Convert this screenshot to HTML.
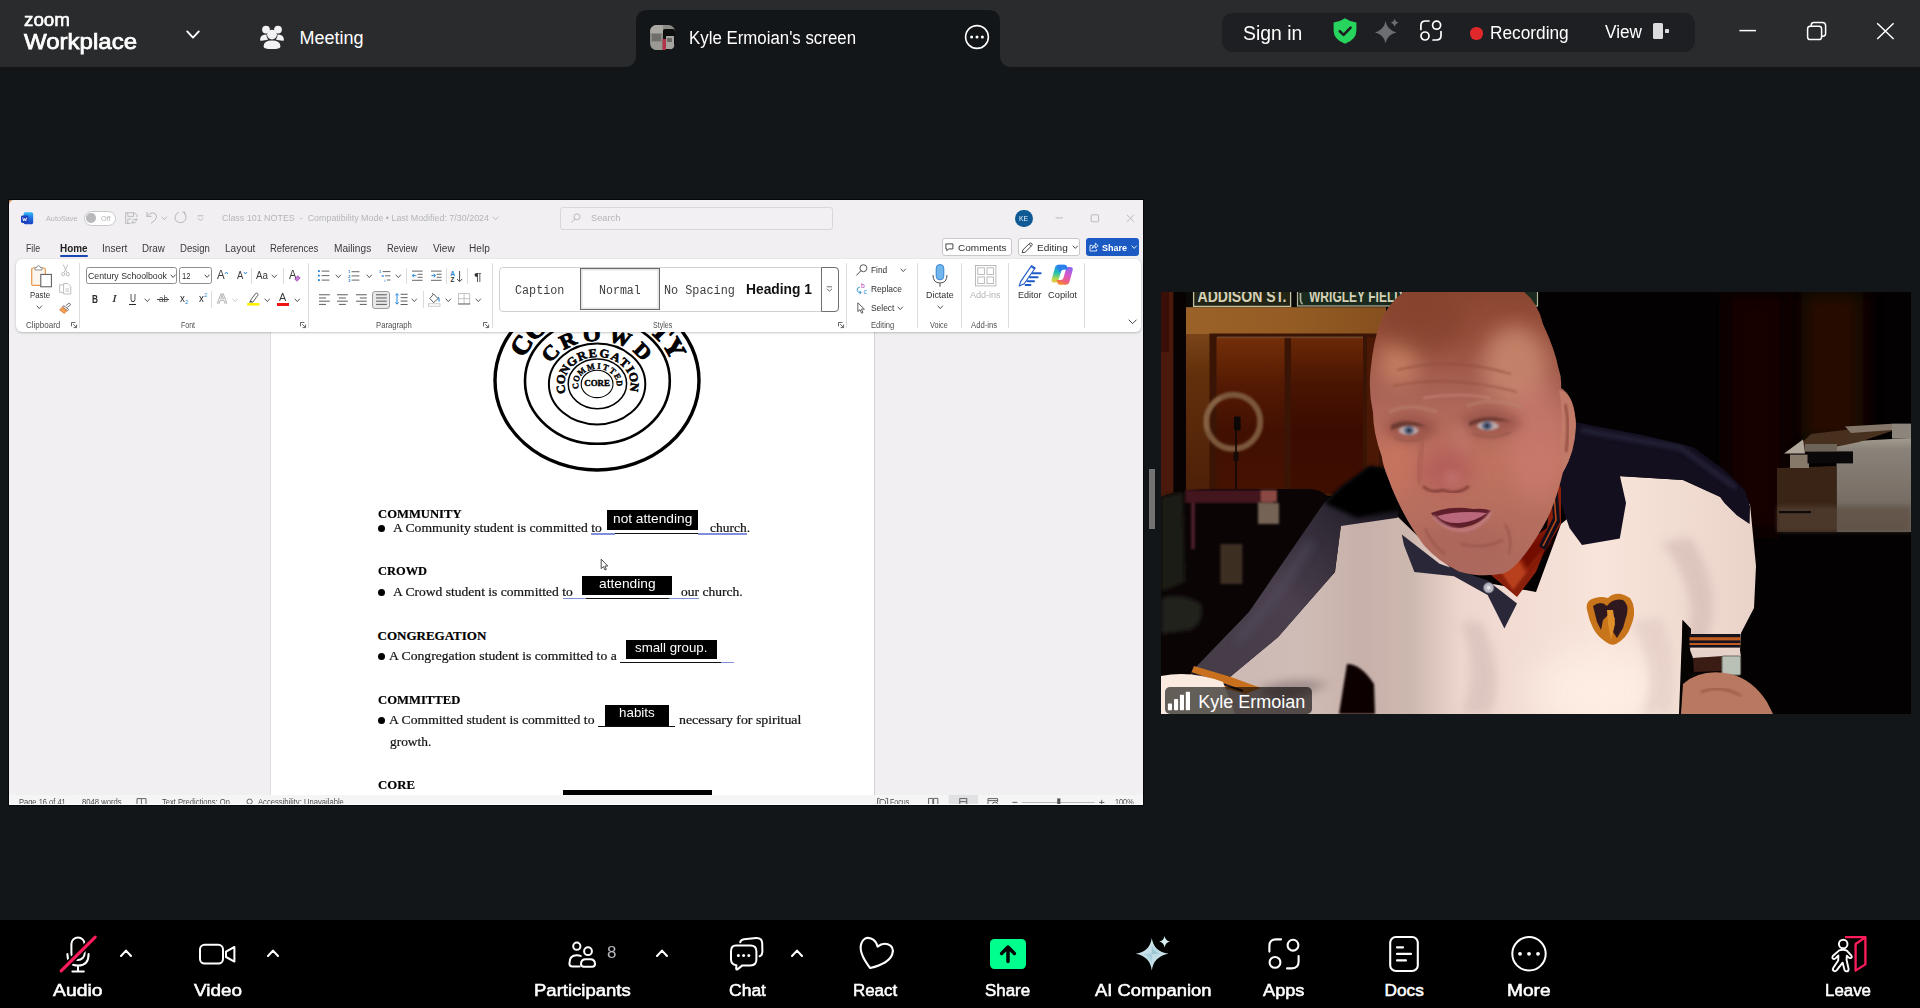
<!DOCTYPE html>
<html><head><meta charset="utf-8"><title>Zoom Meeting</title>
<style>
html,body{margin:0;padding:0;}
body{width:1920px;height:1008px;background:#131619;overflow:hidden;position:relative;font-family:"Liberation Sans",sans-serif;}
.a{position:absolute;display:block;box-sizing:border-box;}
.t{position:absolute;display:block;white-space:pre;line-height:1;transform-origin:0 0;}
svg{overflow:visible}
</style></head><body>
<div class="a" style="left:0.00px;top:0.00px;width:1920.00px;height:67.00px;background:#2a2b2d;"></div>
<svg class="a" style="left:0;top:0" width="1920" height="67"><path d="M624 67 Q636 67 636 55 L636 22 Q636 10 648 10 L988 10 Q1000 10 1000 22 L1000 55 Q1000 67 1012 67 Z" fill="#131619"/></svg>
<span class="t" style="left:24.00px;top:9.92px;font-size:19px;color:#fff;transform:scaleX(0.9900);-webkit-text-stroke:0.6px #fff;">zoom</span>
<span class="t" style="left:24.00px;top:31.38px;font-size:22px;color:#fff;transform:scaleX(1.0915);-webkit-text-stroke:0.75px #fff;">Workplace</span>
<svg class="a" style="left:185px;top:28px;" width="16" height="14" viewBox="0 0 16 14"><path d="M2.2 3.4 L8 9.6 L13.8 3.4" fill="none" stroke="#fff" stroke-width="1.9" stroke-linecap="round" stroke-linejoin="round"/></svg>
<svg class="a" style="left:258px;top:23px;" width="28" height="28" viewBox="0 0 28 28"><g fill="#f2f2f4"><circle cx="8" cy="6.6" r="3.9"/><circle cx="20" cy="6.6" r="3.9"/>
<path d="M2 17.6 Q2 11.2 8.5 11.6 Q8.2 14.5 10.2 16.6 Q7 17.8 2 17.6Z"/><path d="M26 17.6 Q26 11.2 19.5 11.6 Q19.8 14.5 17.8 16.6 Q21 17.8 26 17.6Z"/>
<circle cx="14" cy="11.6" r="4.9"/><path d="M5.6 23.4 Q5.6 17.6 14 17.6 Q22.4 17.6 22.4 23.4 Q22.4 26 14 26 Q5.6 26 5.6 23.4Z"/></g></svg>
<span class="t" style="left:299.60px;top:28.76px;font-size:18px;color:#fff;">Meeting</span>
<svg class="a" style="left:650px;top:25px;" width="25" height="25" viewBox="0 0 25 25"><defs><clipPath id="avc"><rect x="0" y="0" width="25" height="25" rx="6.5"/></clipPath></defs>
<g clip-path="url(#avc)"><rect width="25" height="25" fill="#8c8b86"/><rect x="0" y="0" width="13" height="8" fill="#a9a8a3"/><rect x="2" y="9" width="9" height="7" fill="#6f6e6a"/><rect x="1" y="17" width="11" height="8" fill="#9a9994"/>
<rect x="13" y="4" width="12" height="21" rx="2" fill="#0d0d0e"/><rect x="16" y="11" width="8" height="13" fill="#a5a4a0"/><rect x="12.5" y="14" width="3.5" height="11" fill="#b3344a"/><rect x="17" y="13" width="5" height="4" fill="#6a6966"/></g></svg>
<span class="t" style="left:689.40px;top:28.76px;font-size:18px;color:#fff;transform:scaleX(0.9355);">Kyle Ermoian's screen</span>
<svg class="a" style="left:963px;top:23px;" width="28" height="28" viewBox="0 0 28 28"><circle cx="14" cy="14" r="11.4" fill="none" stroke="#fff" stroke-width="1.6"/><circle cx="8.6" cy="14" r="1.5" fill="#fff"/><circle cx="14" cy="14" r="1.5" fill="#fff"/><circle cx="19.4" cy="14" r="1.5" fill="#fff"/></svg>
<div class="a" style="left:1222.00px;top:13.00px;width:473.00px;height:39.00px;background:#1e1f22;border-radius:11px;"></div>
<span class="t" style="left:1243.30px;top:23.07px;font-size:20px;color:#fff;transform:scaleX(0.9680);">Sign in</span>
<svg class="a" style="left:1333px;top:18px;" width="24" height="26" viewBox="0 0 24 26"><path d="M12 0.3 Q16.5 3.6 23.4 4.4 L23.4 12.4 Q23.4 21.4 12 25.8 Q0.6 21.4 0.6 12.4 L0.6 4.4 Q7.5 3.6 12 0.3Z" fill="#27d45e"/><path d="M6.8 13.2 L10.6 16.9 L17.6 9.6" fill="none" stroke="#1e1f22" stroke-width="2.6" stroke-linecap="round" stroke-linejoin="round"/></svg>
<svg class="a" style="left:1374px;top:18px;" width="26" height="26" viewBox="0 0 26 26"><path d="M11.6 3 Q12.8 11.6 22.4 14.4 Q12.8 16.6 11.6 25.2 Q10.2 16.6 1 14.4 Q10.2 11.6 11.6 3Z" fill="#6d6e71"/><path d="M20.6 0.6 Q21.2 4 24.8 4.8 Q21.2 5.6 20.6 9 Q20 5.6 16.4 4.8 Q20 4 20.6 0.6Z" fill="#6d6e71"/></svg>
<svg class="a" style="left:1419px;top:19px;" width="24" height="24" viewBox="0 0 24 24"><g fill="none" stroke="#fff" stroke-width="1.7" stroke-linecap="round"><circle cx="17.6" cy="6.2" r="4"/><circle cx="6" cy="17" r="4"/><path d="M1.9 10.4 L1.9 6.6 Q1.9 2 6.5 2 L10 2"/><path d="M22 12.6 L22 16.6 Q22 21 17.6 21 L14 21"/></g></svg>
<div class="a" style="left:1470.4px;top:27.2px;width:12.4px;height:12.4px;border-radius:50%;background:#e0282b"></div>
<span class="t" style="left:1489.60px;top:24.34px;font-size:18.5px;color:#fff;transform:scaleX(0.9333);">Recording</span>
<span class="t" style="left:1605.00px;top:22.96px;font-size:18px;color:#fff;transform:scaleX(0.9563);">View</span>
<div class="a" style="left:1653.00px;top:23.00px;width:10.40px;height:16.00px;background:#dcdcde;border-radius:1.6px;"></div>
<div class="a" style="left:1665.00px;top:28.60px;width:4.40px;height:4.60px;background:#dcdcde;border-radius:0.8px;"></div>
<svg class="a" style="left:1730px;top:14px;" width="180" height="34" viewBox="0 0 180 34"><g fill="none" stroke="#fff" stroke-width="1.5">
<path d="M9.4 16.6 L26 16.6"/>
<rect x="77.6" y="12.2" width="14" height="13.4" rx="2.6"/><path d="M81.2 12 L81.2 11 Q81.2 8.4 83.8 8.4 L92.4 8.4 Q95.6 8.4 95.6 11.6 L95.6 19.6 Q95.6 22.2 93 22.2 L92 22.2"/>
<path d="M147.2 9.2 L163.6 25 M163.6 9.2 L147.2 25"/></g></svg>
<div class="a" style="left:0.00px;top:920.00px;width:1920.00px;height:88.00px;background:#000;"></div>
<svg class="a" style="left:58px;top:932px;" width="42" height="44" viewBox="0 0 42 44"><g fill="none" stroke="#fff" stroke-width="2" stroke-linecap="round">
<rect x="13.4" y="5.4" width="13.2" height="22.6" rx="6.6"/><path d="M9.4 22 Q9.4 33.6 20 33.6 Q30.6 33.6 30.6 22"/><path d="M20 34 L20 39.2 M14.4 39.4 L25.8 39.4"/></g>
<path d="M3.4 38.6 L36.8 5.6" stroke="#000" stroke-width="6.4" stroke-linecap="butt"/><path d="M3.2 38.8 L37.2 5.2" stroke="#ff1c5c" stroke-width="3.1" stroke-linecap="round"/></svg>
<span class="t" style="left:53.00px;top:981.64px;font-size:17.2px;color:#fff;transform:scaleX(1.1252);-webkit-text-stroke:0.55px #fff;">Audio</span>
<svg class="a" style="left:119.2px;top:947.8px;" width="14" height="10" viewBox="0 0 14 10"><path d="M2 8 L7 2.6 L12 8" fill="none" stroke="#fff" stroke-width="2.1" stroke-linecap="round" stroke-linejoin="round"/></svg>
<svg class="a" style="left:196px;top:940px;" width="44" height="28" viewBox="0 0 44 28"><g fill="none" stroke="#fff" stroke-width="2" stroke-linejoin="round"><rect x="4" y="4.8" width="23" height="18.8" rx="4.6"/><path d="M30 11.6 L38.4 7 L38.4 21.6 L30 17Z"/></g></svg>
<span class="t" style="left:193.75px;top:981.64px;font-size:17.2px;color:#fff;transform:scaleX(1.0988);-webkit-text-stroke:0.55px #fff;">Video</span>
<svg class="a" style="left:266px;top:947.8px;" width="14" height="10" viewBox="0 0 14 10"><path d="M2 8 L7 2.6 L12 8" fill="none" stroke="#fff" stroke-width="2.1" stroke-linecap="round" stroke-linejoin="round"/></svg>
<svg class="a" style="left:565px;top:938px;" width="34" height="32" viewBox="0 0 34 32"><g fill="none" stroke="#fff" stroke-width="2" stroke-linecap="round"><circle cx="11.8" cy="8.2" r="3.6"/><circle cx="23" cy="13.2" r="3.9"/>
<path d="M14.6 28.4 L7.4 28.4 Q4.4 28.4 4.4 25.4 Q4.4 17.2 11.8 17.2 Q14.4 17.2 15.8 18"/><path d="M16 26 Q16 21.2 20.8 21.2 L25.2 21.2 Q30 21.2 30 26 Q30 28.8 27.2 28.8 L18.8 28.8 Q16 28.8 16 26Z"/></g></svg>
<span class="t" style="left:607.30px;top:944.41px;font-size:17px;color:#b6b6be;transform:scaleX(0.9942);">8</span>
<span class="t" style="left:534.00px;top:981.64px;font-size:17.2px;color:#fff;transform:scaleX(1.0772);-webkit-text-stroke:0.55px #fff;">Participants</span>
<svg class="a" style="left:655px;top:947.8px;" width="14" height="10" viewBox="0 0 14 10"><path d="M2 8 L7 2.6 L12 8" fill="none" stroke="#fff" stroke-width="2.1" stroke-linecap="round" stroke-linejoin="round"/></svg>
<svg class="a" style="left:727px;top:934px;" width="40" height="40" viewBox="0 0 40 40"><g fill="none" stroke="#fff" stroke-width="2" stroke-linecap="round" stroke-linejoin="round">
<path d="M8.8 11.6 L23.6 11.6 Q29.4 11.6 29.4 17.4 L29.4 25.6 Q29.4 31.4 23.6 31.4 L15.4 31.4 L10.4 35.4 Q9.2 36 9.2 34.4 L9.4 31.2 Q4 30.6 4 25.6 L4 17.4 Q4 11.6 8.8 11.6Z"/>
<path d="M13.2 8.2 Q13.8 5.6 17 5.2 L29.2 4 Q35 3.8 35.2 9.4 L35.4 17.4 Q35.2 21.6 32.6 22.2"/></g>
<circle cx="11.4" cy="21.6" r="1.5" fill="#fff"/><circle cx="16.6" cy="21.6" r="1.5" fill="#fff"/><circle cx="21.8" cy="21.6" r="1.5" fill="#fff"/></svg>
<span class="t" style="left:729.00px;top:981.64px;font-size:17.2px;color:#fff;transform:scaleX(1.0184);-webkit-text-stroke:0.55px #fff;">Chat</span>
<svg class="a" style="left:789.6px;top:947.8px;" width="14" height="10" viewBox="0 0 14 10"><path d="M2 8 L7 2.6 L12 8" fill="none" stroke="#fff" stroke-width="2.1" stroke-linecap="round" stroke-linejoin="round"/></svg>
<svg class="a" style="left:855px;top:936px;" width="40" height="36" viewBox="0 0 40 36"><path transform="rotate(19 20 18) translate(20 18) scale(1.06) translate(-20 -18)" d="M20 32 Q4.6 22 4.6 13 Q4.6 5.4 11.6 5.4 Q16.8 5.4 20 10.6 Q23.2 5.4 28.4 5.4 Q35.4 5.4 35.4 13 Q35.4 22 20 32Z" fill="none" stroke="#fff" stroke-width="2" stroke-linejoin="round"/></svg>
<span class="t" style="left:852.50px;top:981.64px;font-size:17.2px;color:#fff;transform:scaleX(0.9837);-webkit-text-stroke:0.55px #fff;">React</span>
<div class="a" style="left:990.00px;top:939.00px;width:36.00px;height:29.80px;background:#00fe8d;border-radius:4.5px;"></div>
<svg class="a" style="left:998px;top:943px;" width="20" height="22" viewBox="0 0 20 22"><path d="M10 18.6 L10 5 M3.6 10.4 L10 4 L16.4 10.4" fill="none" stroke="#050505" stroke-width="3.5" stroke-linecap="round" stroke-linejoin="round"/></svg>
<span class="t" style="left:985.40px;top:981.64px;font-size:17.2px;color:#fff;transform:scaleX(0.9848);-webkit-text-stroke:0.55px #fff;">Share</span>
<svg class="a" style="left:1133px;top:934px;" width="40" height="40" viewBox="0 0 40 40"><defs><linearGradient id="aig" x1="0" y1="0" x2="1" y2="1"><stop offset="0" stop-color="#f4fbfc"/><stop offset="0.5" stop-color="#b9d9e3"/><stop offset="1" stop-color="#e6f3f6"/></linearGradient></defs>
<path d="M18.8 4 Q20.6 17.4 35.6 19.8 Q20.6 22.6 18.8 36.4 Q17 22.6 2.8 19.8 Q17 17.4 18.8 4Z" fill="url(#aig)"/><path d="M18.8 10 Q19.4 18.6 28 19.8 L18.8 19.8Z" fill="#8fbccb" opacity="0.7"/><path d="M18.8 30 Q18.2 21.4 9 19.8 L18.8 19.8Z" fill="#9cc6d3" opacity="0.6"/>
<path d="M31.6 2 Q32.4 6.8 37 7.6 Q32.4 8.6 31.6 13.4 Q30.8 8.6 26.2 7.6 Q30.8 6.8 31.6 2Z" fill="#d7edf2"/></svg>
<span class="t" style="left:1094.60px;top:981.64px;font-size:17.2px;color:#fff;transform:scaleX(1.0697);-webkit-text-stroke:0.55px #fff;">AI Companion</span>
<svg class="a" style="left:1266px;top:936px;" width="36" height="36" viewBox="0 0 36 36"><g fill="none" stroke="#fff" stroke-width="2.1" stroke-linecap="round"><circle cx="27" cy="9.2" r="5.4"/><circle cx="9" cy="26.4" r="5.4"/><path d="M3.4 15.6 L3.4 10 Q3.4 3.4 10 3.4 L15 3.4"/><path d="M32.6 20 L32.6 25.6 Q32.6 32.4 25.8 32.4 L21 32.4"/></g></svg>
<span class="t" style="left:1263.30px;top:981.64px;font-size:17.2px;color:#fff;transform:scaleX(1.0585);-webkit-text-stroke:0.55px #fff;">Apps</span>
<svg class="a" style="left:1386px;top:933px;" width="36" height="42" viewBox="0 0 36 42"><g fill="none" stroke="#fff" stroke-width="2.1" stroke-linecap="round"><rect x="4.2" y="4" width="27.6" height="34" rx="5.6"/><path d="M11 14.4 L17 14.4 M11 20.9 L25 20.9 M11 27.4 L20 27.4"/></g></svg>
<span class="t" style="left:1384.60px;top:981.64px;font-size:17.2px;color:#fff;-webkit-text-stroke:0.55px #fff;">Docs</span>
<svg class="a" style="left:1509px;top:934px;" width="40" height="40" viewBox="0 0 40 40"><circle cx="20" cy="19.8" r="16.7" fill="none" stroke="#fff" stroke-width="2"/><circle cx="11" cy="19.8" r="1.9" fill="#fff"/><circle cx="20" cy="19.8" r="1.9" fill="#fff"/><circle cx="29" cy="19.8" r="1.9" fill="#fff"/></svg>
<span class="t" style="left:1507.00px;top:981.64px;font-size:17.2px;color:#fff;transform:scaleX(1.1126);-webkit-text-stroke:0.55px #fff;">More</span>
<svg class="a" style="left:1828px;top:933px;" width="42" height="42" viewBox="0 0 42 42"><path d="M17 4.2 L37.4 4.2 L37.4 31.4 L27.6 37.6 L27.6 11 L37 4.6" fill="none" stroke="#ff1c5c" stroke-width="2.3" stroke-linejoin="round"/>
<circle cx="15.2" cy="11" r="4.3" fill="#000" stroke="#fff" stroke-width="1.9"/>
<path d="M11.2 17.4 Q15 16 18.8 17.6 L23.4 22.6 Q24.4 24.4 22.8 25 Q21.6 25.4 20.6 24.4 L18.8 22.8 L18.6 27 L20.6 36 Q20.6 38.4 18.6 38.4 Q16.8 38.4 16.4 36.4 L14.6 29.6 L8.6 37.4 Q7.2 38.8 5.6 37.8 Q4.2 36.6 5.2 35 L10.2 27.4 L10.4 22.4 L7.4 25.4 Q6 26.6 4.8 25.6 Q3.8 24.4 4.8 23 Z" fill="#000" stroke="#fff" stroke-width="1.9" stroke-linejoin="round"/></svg>
<span class="t" style="left:1825.00px;top:981.64px;font-size:17.2px;color:#fff;transform:scaleX(0.9816);-webkit-text-stroke:0.55px #fff;">Leave</span>
<div class="a" style="left:8.00px;top:199.00px;width:1136.00px;height:607.00px;background:#05070a;"></div>
<div class="a" style="left:9.00px;top:200.00px;width:7.00px;height:7.00px;background:#c8834f;"></div>
<div class="a" style="left:9.00px;top:332.00px;width:1134.00px;height:473.00px;background:#f1eff2;"></div>
<div class="a" style="left:270.00px;top:332.00px;width:605.00px;height:470.00px;background:#fff;border-left:1px solid #dedede;border-right:1px solid #d5d3d6;"></div>
<svg class="a" style="left:470px;top:325px" width="260" height="160" viewBox="470 325 260 160">
<g fill="none" stroke="#000">
<ellipse cx="597" cy="380.5" rx="102" ry="89.5" stroke-width="3.4"/>
<ellipse cx="597.4" cy="381" rx="72.4" ry="62.8" stroke-width="2.6"/>
<ellipse cx="597.1" cy="384" rx="48.2" ry="40.4" stroke-width="2"/>
<ellipse cx="597.4" cy="383.8" rx="29.2" ry="24.9" stroke-width="1.5"/>
<ellipse cx="597.1" cy="383.9" rx="15.9" ry="13.7" stroke-width="1.1"/>
</g>
<g font-family="'Liberation Serif',serif" font-weight="700" fill="#000" stroke="#000" stroke-linejoin="round"><text transform="translate(521.35 345.30) rotate(-57.9) scale(1.05 1)" y="8.58" font-size="26" stroke-width="1.1" text-anchor="middle">C</text><text transform="translate(535.48 328.79) rotate(-41.4) scale(1.05 1)" y="8.58" font-size="26" stroke-width="1.1" text-anchor="middle">O</text><text transform="translate(556.70 315.13) rotate(-24.5) scale(1.05 1)" y="8.58" font-size="26" stroke-width="1.1" text-anchor="middle">M</text><text transform="translate(583.74 307.39) rotate(-7.6) scale(1.05 1)" y="8.58" font-size="26" stroke-width="1.1" text-anchor="middle">M</text><text transform="translate(609.57 307.29) rotate(7.2) scale(1.05 1)" y="8.58" font-size="26" stroke-width="1.1" text-anchor="middle">U</text><text transform="translate(631.81 312.83) rotate(20.9) scale(1.05 1)" y="8.58" font-size="26" stroke-width="1.1" text-anchor="middle">N</text><text transform="translate(648.33 321.13) rotate(32.6) scale(1.05 1)" y="8.58" font-size="26" stroke-width="1.1" text-anchor="middle">I</text><text transform="translate(661.88 331.92) rotate(44.7) scale(1.05 1)" y="8.58" font-size="26" stroke-width="1.1" text-anchor="middle">T</text><text transform="translate(674.30 348.06) rotate(60.5) scale(1.05 1)" y="8.58" font-size="26" stroke-width="1.1" text-anchor="middle">Y</text><text transform="translate(550.39 353.16) rotate(-47.0) scale(1.08 1)" y="6.77" font-size="20.5" stroke-width="0.9" text-anchor="middle">C</text><text transform="translate(567.83 340.55) rotate(-25.5) scale(1.08 1)" y="6.77" font-size="20.5" stroke-width="0.9" text-anchor="middle">R</text><text transform="translate(591.70 334.23) rotate(-4.6) scale(1.08 1)" y="6.77" font-size="20.5" stroke-width="0.9" text-anchor="middle">O</text><text transform="translate(620.17 337.77) rotate(19.0) scale(1.08 1)" y="6.77" font-size="20.5" stroke-width="0.9" text-anchor="middle">W</text><text transform="translate(642.64 351.35) rotate(44.2) scale(1.08 1)" y="6.77" font-size="20.5" stroke-width="0.9" text-anchor="middle">D</text><text transform="translate(561.06 389.38) rotate(-101.9) scale(1.05 1)" y="3.96" font-size="12" stroke-width="0.55" text-anchor="middle">C</text><text transform="translate(560.93 379.30) rotate(-79.6) scale(1.05 1)" y="3.96" font-size="12" stroke-width="0.55" text-anchor="middle">O</text><text transform="translate(564.66 369.72) rotate(-58.2) scale(1.05 1)" y="3.96" font-size="12" stroke-width="0.55" text-anchor="middle">N</text><text transform="translate(571.86 361.65) rotate(-38.8) scale(1.05 1)" y="3.96" font-size="12" stroke-width="0.55" text-anchor="middle">G</text><text transform="translate(581.78 355.94) rotate(-21.5) scale(1.05 1)" y="3.96" font-size="12" stroke-width="0.55" text-anchor="middle">R</text><text transform="translate(592.69 353.26) rotate(-6.3) scale(1.05 1)" y="3.96" font-size="12" stroke-width="0.55" text-anchor="middle">E</text><text transform="translate(604.39 353.54) rotate(9.0) scale(1.05 1)" y="3.96" font-size="12" stroke-width="0.55" text-anchor="middle">G</text><text transform="translate(615.69 357.01) rotate(25.3) scale(1.05 1)" y="3.96" font-size="12" stroke-width="0.55" text-anchor="middle">A</text><text transform="translate(624.62 362.91) rotate(42.1) scale(1.05 1)" y="3.96" font-size="12" stroke-width="0.55" text-anchor="middle">T</text><text transform="translate(630.07 369.30) rotate(57.3) scale(1.05 1)" y="3.96" font-size="12" stroke-width="0.55" text-anchor="middle">I</text><text transform="translate(633.59 377.18) rotate(74.9) scale(1.05 1)" y="3.96" font-size="12" stroke-width="0.55" text-anchor="middle">O</text><text transform="translate(634.30 387.24) rotate(97.2) scale(1.05 1)" y="3.96" font-size="12" stroke-width="0.55" text-anchor="middle">N</text><text transform="translate(575.62 385.88) rotate(-97.3) scale(0.95 1)" y="2.84" font-size="8.6" stroke-width="0.4" text-anchor="middle">C</text><text transform="translate(576.53 378.55) rotate(-68.8) scale(0.95 1)" y="2.84" font-size="8.6" stroke-width="0.4" text-anchor="middle">O</text><text transform="translate(581.62 371.55) rotate(-40.5) scale(0.95 1)" y="2.84" font-size="8.6" stroke-width="0.4" text-anchor="middle">M</text><text transform="translate(590.63 366.90) rotate(-15.0) scale(0.95 1)" y="2.84" font-size="8.6" stroke-width="0.4" text-anchor="middle">M</text><text transform="translate(598.86 366.03) rotate(2.9) scale(0.95 1)" y="2.84" font-size="8.6" stroke-width="0.4" text-anchor="middle">I</text><text transform="translate(605.79 367.33) rotate(18.4) scale(0.95 1)" y="2.84" font-size="8.6" stroke-width="0.4" text-anchor="middle">T</text><text transform="translate(612.75 371.03) rotate(38.2) scale(0.95 1)" y="2.84" font-size="8.6" stroke-width="0.4" text-anchor="middle">T</text><text transform="translate(617.54 376.57) rotate(61.0) scale(0.95 1)" y="2.84" font-size="8.6" stroke-width="0.4" text-anchor="middle">E</text><text transform="translate(619.49 383.37) rotate(87.6) scale(0.95 1)" y="2.84" font-size="8.6" stroke-width="0.4" text-anchor="middle">D</text>
<text x="597.1" y="385.9" font-size="8.4" stroke-width="0.4" text-anchor="middle" textLength="25.6" lengthAdjust="spacingAndGlyphs">CORE</text>
</g></svg>
<span class="t" style="left:377.50px;top:506.71px;font-size:13px;color:#000;font-weight:700;font-family:'Liberation Serif',serif;transform:scaleX(0.9728);-webkit-text-stroke:0.2px #000;">COMMUNITY</span>
<div class="a" style="left:377.6px;top:524.6px;width:7.2px;height:7.2px;border-radius:50%;background:#000"></div>
<span class="t" style="left:392.50px;top:521.75px;font-size:12px;color:#111;font-family:'Liberation Serif',serif;transform:scaleX(1.1369);-webkit-text-stroke:0.22px #222;">A Community student is committed to</span>
<div class="a" style="left:608.00px;top:532.80px;width:95.40px;height:1.00px;background:#111;"></div>
<div class="a" style="left:591.20px;top:533.40px;width:23.60px;height:1.40px;background:#7f8fd8;"></div>
<div class="a" style="left:698.00px;top:533.40px;width:49.40px;height:1.40px;background:#7f8fd8;"></div>
<div class="a" style="left:607.20px;top:509.90px;width:90.50px;height:20.10px;background:#000;"></div>
<span class="t" style="left:613.00px;top:512.27px;font-size:13.5px;color:#fff;transform:scaleX(1.0158);">not attending</span>
<span class="t" style="left:710.10px;top:521.75px;font-size:12px;color:#111;font-family:'Liberation Serif',serif;transform:scaleX(1.1221);-webkit-text-stroke:0.22px #222;">church.</span>
<span class="t" style="left:377.50px;top:563.61px;font-size:13px;color:#000;font-weight:700;font-family:'Liberation Serif',serif;transform:scaleX(0.9575);-webkit-text-stroke:0.2px #000;">CROWD</span>
<div class="a" style="left:377.6px;top:589.1px;width:7.2px;height:7.2px;border-radius:50%;background:#000"></div>
<span class="t" style="left:392.50px;top:586.35px;font-size:12px;color:#111;font-family:'Liberation Serif',serif;transform:scaleX(1.1302);-webkit-text-stroke:0.22px #222;">A Crowd student is committed to</span>
<div class="a" style="left:579.50px;top:597.50px;width:94.80px;height:1.00px;background:#111;"></div>
<div class="a" style="left:563.00px;top:597.90px;width:22.60px;height:1.40px;background:#7f8fd8;"></div>
<div class="a" style="left:668.80px;top:597.90px;width:29.80px;height:1.40px;background:#7f8fd8;"></div>
<div class="a" style="left:581.90px;top:575.60px;width:90.10px;height:19.20px;background:#000;"></div>
<span class="t" style="left:598.70px;top:577.27px;font-size:13.5px;color:#fff;transform:scaleX(1.0189);">attending</span>
<span class="t" style="left:681.00px;top:586.35px;font-size:12px;color:#111;font-family:'Liberation Serif',serif;transform:scaleX(1.1273);-webkit-text-stroke:0.22px #222;">our church.</span>
<span class="t" style="left:377.50px;top:628.51px;font-size:13px;color:#000;font-weight:700;font-family:'Liberation Serif',serif;-webkit-text-stroke:0.2px #000;">CONGREGATION</span>
<div class="a" style="left:377.6px;top:653.2px;width:7.2px;height:7.2px;border-radius:50%;background:#000"></div>
<span class="t" style="left:389.40px;top:650.35px;font-size:12px;color:#111;font-family:'Liberation Serif',serif;transform:scaleX(1.1387);-webkit-text-stroke:0.22px #222;">A Congregation student is committed to a</span>
<div class="a" style="left:620.40px;top:661.80px;width:112.60px;height:1.00px;background:#111;"></div>
<div class="a" style="left:721.00px;top:661.80px;width:12.80px;height:1.60px;background:#7f8fd8;"></div>
<div class="a" style="left:626.20px;top:639.60px;width:90.40px;height:19.30px;background:#000;"></div>
<span class="t" style="left:635.00px;top:641.07px;font-size:13.5px;color:#fff;transform:scaleX(0.9846);">small group.</span>
<span class="t" style="left:377.50px;top:692.51px;font-size:13px;color:#000;font-weight:700;font-family:'Liberation Serif',serif;transform:scaleX(0.9740);-webkit-text-stroke:0.2px #000;">COMMITTED</span>
<div class="a" style="left:377.6px;top:717.1px;width:7.2px;height:7.2px;border-radius:50%;background:#000"></div>
<span class="t" style="left:389.40px;top:714.35px;font-size:12px;color:#111;font-family:'Liberation Serif',serif;transform:scaleX(1.1396);-webkit-text-stroke:0.22px #222;">A Committed student is committed to</span>
<div class="a" style="left:598.20px;top:726.10px;width:77.10px;height:1.00px;background:#111;"></div>
<div class="a" style="left:604.50px;top:704.90px;width:64.10px;height:21.10px;background:#000;"></div>
<span class="t" style="left:618.50px;top:706.27px;font-size:13.5px;color:#fff;transform:scaleX(0.9910);">habits</span>
<span class="t" style="left:679.00px;top:714.35px;font-size:12px;color:#111;font-family:'Liberation Serif',serif;transform:scaleX(1.1542);-webkit-text-stroke:0.22px #222;">necessary for spiritual</span>
<span class="t" style="left:390.00px;top:735.75px;font-size:12px;color:#111;font-family:'Liberation Serif',serif;transform:scaleX(1.1163);-webkit-text-stroke:0.22px #222;">growth.</span>
<span class="t" style="left:377.50px;top:777.81px;font-size:13px;color:#000;font-weight:700;font-family:'Liberation Serif',serif;transform:scaleX(0.9824);-webkit-text-stroke:0.2px #000;">CORE</span>
<div class="a" style="left:563.00px;top:790.20px;width:149.20px;height:6.00px;background:#000;"></div>
<svg class="a" style="left:600px;top:558px;" width="10" height="14" viewBox="0 0 10 14"><path d="M1.2 1.2 L1.2 10.6 L3.4 8.6 L5 12 L6.4 11.4 L4.9 8.1 L7.8 8 Z" fill="#fff" stroke="#222" stroke-width="0.8" stroke-linejoin="round"/></svg>
<div class="a" style="left:9.00px;top:200.00px;width:1134.00px;height:132.00px;background:#f1eff2;border-top-left-radius:5px;"></div>
<svg class="a" style="left:21px;top:212px;" width="12.4" height="12.4" viewBox="0 0 12.4 12.4"><defs><linearGradient id="wg" x1="0" y1="0" x2="0" y2="1"><stop offset="0" stop-color="#35b8f5"/><stop offset="0.5" stop-color="#2170e0"/><stop offset="1" stop-color="#1a40c0"/></linearGradient></defs>
<rect x="2.6" y="0.2" width="9.6" height="12" rx="1.6" fill="url(#wg)"/><rect x="0" y="3.6" width="7.4" height="7.4" rx="1.4" fill="#1a3fbf"/><path d="M1.7 5.6 L2.7 9 L3.7 6.4 L4.7 9 L5.7 5.6" fill="none" stroke="#fff" stroke-width="0.9" stroke-linejoin="round"/></svg>
<span class="t" style="left:46.00px;top:214.77px;font-size:7.6px;color:#b4b4b6;transform:scaleX(0.9558);">AutoSave</span>
<div class="a" style="left:83.5px;top:210.6px;width:32.2px;height:15px;border-radius:8px;background:#fff;border:1px solid #c8c8ca"></div>
<div class="a" style="left:86px;top:213.4px;width:9.6px;height:9.6px;border-radius:50%;background:#b9b9bb"></div>
<span class="t" style="left:101.00px;top:214.77px;font-size:7.6px;color:#b4b4b6;transform:scaleX(0.9603);">Off</span>
<svg class="a" style="left:125px;top:212px;" width="13" height="12.4" viewBox="0 0 13 12.4"><g fill="none" stroke="#b4b4b6" stroke-width="0.9"><path d="M0.6 0.8 L9.6 0.8 L12 3.2 L12 5 M0.6 0.8 L0.6 11.4 L5.4 11.4"/><path d="M2.8 0.8 L2.8 4.4 L8.6 4.4 L8.6 0.8"/><path d="M2.8 11.4 L2.8 7 L6.2 7"/><path d="M7.4 8.2 Q9.6 6 11.6 8 M11.8 6.4 L11.7 8.3 L9.8 8.2 M11.2 10 Q9 12.2 7 10.2 M6.8 11.8 L6.9 9.9 L8.8 10"/></g></svg>
<svg class="a" style="left:146px;top:211.4px;" width="12" height="13" viewBox="0 0 12 13"><path d="M1 1.2 L1 5.4 L5.2 5.4 M1.2 5.2 Q3.4 1.6 6.8 1.8 Q10.6 2.2 10.6 6 Q10.6 8.6 5.4 12.2" fill="none" stroke="#b4b4b6" stroke-width="0.95" stroke-linecap="round" stroke-linejoin="round"/></svg>
<svg class="a" style="left:161.40px;top:215.70px" width="6.6" height="4.6"><path d="M1 1 L3.30 3.60 L5.60 1" fill="none" stroke="#b4b4b6" stroke-width="0.9" stroke-linecap="round" stroke-linejoin="round"/></svg>
<svg class="a" style="left:173.6px;top:211.4px;" width="13" height="13" viewBox="0 0 13 13"><path d="M8.6 1 L10.6 1 L10.6 3.2 M10.4 1.4 Q12.4 3.6 12 6.8 Q11.2 11.6 6.4 11.6 Q1.2 11.4 1 6.4 Q1.2 2.4 4.6 1.4" fill="none" stroke="#b4b4b6" stroke-width="0.95" stroke-linecap="round" stroke-linejoin="round"/></svg>
<svg class="a" style="left:197.4px;top:214.6px;" width="7" height="7" viewBox="0 0 7 7"><path d="M1 0.8 L6 0.8 M1 3.2 L3.5 5.8 L6 3.2" fill="none" stroke="#b4b4b6" stroke-width="0.9" stroke-linecap="round" stroke-linejoin="round"/></svg>
<span class="t" style="left:222.00px;top:215.46px;font-size:8.2px;color:#b4b4b6;transform:scaleX(1.0879);">Class 101 NOTES  -  Compatibility Mode • Last Modified: 7/30/2024</span>
<svg class="a" style="left:492.40px;top:216.30px" width="7" height="4.8"><path d="M1 1 L3.50 3.80 L6.00 1" fill="none" stroke="#b4b4b6" stroke-width="0.9" stroke-linecap="round" stroke-linejoin="round"/></svg>
<div class="a" style="left:560px;top:206.6px;width:272.6px;height:23.4px;border:1px solid #d9d7da;border-radius:3px;background:#f2f0f2"></div>
<svg class="a" style="left:570.6px;top:213px;" width="10" height="10" viewBox="0 0 10 10"><circle cx="6" cy="3.8" r="3" fill="none" stroke="#b4b4b6" stroke-width="0.9"/><path d="M3.8 6 L0.8 9.2" stroke="#b4b4b6" stroke-width="0.9" stroke-linecap="round"/></svg>
<span class="t" style="left:590.60px;top:213.52px;font-size:8.6px;color:#b4b4b6;transform:scaleX(1.0789);">Search</span>
<div class="a" style="left:1015px;top:209.6px;width:17.6px;height:17.6px;border-radius:50%;background:#0f5a94"></div>
<span class="t" style="left:1019.40px;top:215.17px;font-size:7.6px;color:#eaf2fa;transform:scaleX(0.8877);">KE</span>
<svg class="a" style="left:1050px;top:210px;" width="90" height="16" viewBox="0 0 90 16"><g fill="none" stroke="#b4b4b6" stroke-width="0.9"><path d="M5.6 7.9 L13 7.9"/><rect x="41.2" y="4.8" width="7.4" height="7" rx="0.8"/><path d="M77 4.8 L84 11.8 M84 4.8 L77 11.8"/></g></svg>
<span class="t" style="left:25.60px;top:243.63px;font-size:10px;color:#3a3a3a;transform:scaleX(0.8781);">File</span>
<span class="t" style="left:101.50px;top:243.63px;font-size:10px;color:#3a3a3a;transform:scaleX(1.0156);">Insert</span>
<span class="t" style="left:142.25px;top:243.63px;font-size:10px;color:#3a3a3a;transform:scaleX(0.9749);">Draw</span>
<span class="t" style="left:179.60px;top:243.63px;font-size:10px;color:#3a3a3a;transform:scaleX(0.9573);">Design</span>
<span class="t" style="left:225.00px;top:243.63px;font-size:10px;color:#3a3a3a;transform:scaleX(1.0092);">Layout</span>
<span class="t" style="left:270.40px;top:243.63px;font-size:10px;color:#3a3a3a;transform:scaleX(0.9445);">References</span>
<span class="t" style="left:334.40px;top:243.63px;font-size:10px;color:#3a3a3a;transform:scaleX(1.0141);">Mailings</span>
<span class="t" style="left:387.30px;top:243.63px;font-size:10px;color:#3a3a3a;transform:scaleX(0.9302);">Review</span>
<span class="t" style="left:432.90px;top:243.63px;font-size:10px;color:#3a3a3a;transform:scaleX(1.0142);">View</span>
<span class="t" style="left:469.20px;top:243.63px;font-size:10px;color:#3a3a3a;transform:scaleX(1.0113);">Help</span>
<span class="t" style="left:59.75px;top:243.63px;font-size:10px;color:#1f1f1f;font-weight:700;transform:scaleX(0.9916);">Home</span>
<div class="a" style="left:59.75px;top:254.80px;width:28.30px;height:2.20px;background:#1a46b4;border-radius:1px;"></div>
<div class="a" style="left:942.2px;top:238.4px;width:69.4px;height:17.9px;border:1px solid #c9c7ca;border-radius:3px;background:#fff"></div>
<svg class="a" style="left:945.4px;top:242.6px;" width="9" height="9" viewBox="0 0 9 9"><path d="M0.9 0.9 L7.9 0.9 L7.9 5.9 L3.6 5.9 L1.9 7.7 L1.9 5.9 L0.9 5.9Z" fill="none" stroke="#333" stroke-width="0.9" stroke-linejoin="round"/></svg>
<span class="t" style="left:957.75px;top:242.64px;font-size:9.4px;color:#2b2b2b;transform:scaleX(1.0727);">Comments</span>
<div class="a" style="left:1018.4px;top:238.4px;width:61.4px;height:17.9px;border:1px solid #c9c7ca;border-radius:3px;background:#fff"></div>
<svg class="a" style="left:1021px;top:241.6px;" width="13" height="12" viewBox="0 0 13 12"><path d="M1.2 10.8 L1.9 7.8 L8.8 1.2 Q9.8 0.6 10.8 1.6 Q11.8 2.6 10.8 3.6 L4.2 10.2 Z M8 2.2 L10 4.2" fill="none" stroke="#333" stroke-width="0.9" stroke-linejoin="round"/></svg>
<span class="t" style="left:1036.60px;top:242.64px;font-size:9.4px;color:#2b2b2b;transform:scaleX(1.0751);">Editing</span>
<svg class="a" style="left:1071.80px;top:245.10px" width="6.6" height="4.4"><path d="M1 1 L3.30 3.40 L5.60 1" fill="none" stroke="#333" stroke-width="0.9" stroke-linecap="round" stroke-linejoin="round"/></svg>
<div class="a" style="left:1086px;top:238.4px;width:53.4px;height:17.9px;border-radius:3px;background:#1b5ac2"></div>
<svg class="a" style="left:1088.6px;top:242px;" width="10" height="10" viewBox="0 0 10 10"><path d="M3.4 3.4 L1 3.4 L1 9 L7.6 9 L7.6 7.2 M3 6.6 Q3.4 3.4 6.4 3.2 L6.4 1.2 L9.2 3.8 L6.4 6.2 L6.4 4.6 Q4.2 4.6 3 6.6Z" fill="none" stroke="#fff" stroke-width="0.85" stroke-linejoin="round"/></svg>
<span class="t" style="left:1101.90px;top:242.57px;font-size:9.6px;color:#fff;font-weight:700;transform:scaleX(0.9370);">Share</span>
<svg class="a" style="left:1131.40px;top:245.10px" width="6.4" height="4.4"><path d="M1 1 L3.20 3.40 L5.40 1" fill="none" stroke="#fff" stroke-width="0.9" stroke-linecap="round" stroke-linejoin="round"/></svg>
<div class="a" style="left:15.6px;top:258.8px;width:1125.6px;height:73.2px;background:#fff;border-radius:6px 5px 5px 6px;box-shadow:0 1px 2.5px rgba(0,0,0,0.22),0 0 1px rgba(0,0,0,0.12)"></div>
<svg class="a" style="left:31px;top:264.6px;" width="21.4" height="22.6" viewBox="0 0 21.4 22.6"><rect x="0.7" y="3" width="13.6" height="17.4" rx="1.2" fill="#fdf6ee" stroke="#e8964a" stroke-width="1.2"/>
<path d="M4 3.6 L4 2.4 L5.8 2.4 Q6 0.6 7.5 0.6 Q9 0.6 9.2 2.4 L11 2.4 L11 3.6 L11 5 L4 5Z" fill="#fff" stroke="#777" stroke-width="0.8"/>
<rect x="9.8" y="9.4" width="10.6" height="12.4" fill="#fff" stroke="#555" stroke-width="1"/></svg>
<span class="t" style="left:29.75px;top:291.01px;font-size:9.2px;color:#2f2f2f;transform:scaleX(0.8501);">Paste</span>
<svg class="a" style="left:36.40px;top:304.70px" width="6.6" height="4.6"><path d="M1 1 L3.30 3.60 L5.60 1" fill="none" stroke="#444" stroke-width="0.9" stroke-linecap="round" stroke-linejoin="round"/></svg>
<svg class="a" style="left:61px;top:264px;" width="9" height="12.6" viewBox="0 0 9 12.6"><g fill="none" stroke="#b4b4b6" stroke-width="0.85"><path d="M2.2 0.6 L6 8.6 M6.8 0.6 L3 8.6"/><circle cx="2.2" cy="10.2" r="1.6"/><circle cx="6.8" cy="10.2" r="1.6"/></g></svg>
<svg class="a" style="left:59px;top:283.4px;" width="12.6" height="11.6" viewBox="0 0 12.6 11.6"><g fill="none" stroke="#b4b4b6" stroke-width="0.85"><path d="M4 1.8 L0.6 1.8 L0.6 9.4 L4 9.4"/><path d="M4.6 0.6 L9 0.6 L11.8 3.4 L11.8 11 L4.6 11Z"/><path d="M6.6 6 L10 6 M6.6 8.2 L10 8.2"/></g></svg>
<svg class="a" style="left:59.4px;top:301.6px;" width="12.4" height="12" viewBox="0 0 12.4 12"><path d="M6.8 3.6 L10.4 1 L11.6 2.8 L8.2 5.4" fill="#fff" stroke="#555" stroke-width="0.8" stroke-linejoin="round"/><path d="M4.6 3.6 L9.6 7.4 L8.6 8.8 L3.6 5Z" fill="#fff" stroke="#555" stroke-width="0.8" stroke-linejoin="round"/><path d="M3.4 5.2 L8 8.8 L5.2 11.4 L0.6 7.8Z" fill="#f3a054" stroke="#e0762a" stroke-width="0.8" stroke-linejoin="round"/></svg>
<span class="t" style="left:25.60px;top:320.79px;font-size:8.4px;color:#505050;transform:scaleX(0.9567);">Clipboard</span>
<svg class="a" style="left:71px;top:322.2px;" width="6" height="6" viewBox="0 0 6 6"><path d="M0.5 4.4 L0.5 0.5 L4.4 0.5" fill="none" stroke="#555" stroke-width="0.9"/><path d="M2.2 2.2 L5.4 5.4 M5.6 2.6 L5.6 5.6 L2.6 5.6" fill="none" stroke="#555" stroke-width="0.9"/></svg>
<div class="a" style="left:79.10px;top:262.50px;width:1.00px;height:65.30px;background:#dcdcdc;"></div>
<div class="a" style="left:86.2px;top:266.9px;width:91px;height:17.4px;border:1px solid #8e8e90;border-radius:2.5px;background:#fff"></div>
<span class="t" style="left:87.90px;top:271.98px;font-size:9px;color:#2f2f2f;transform:scaleX(0.9747);">Century Schoolbook</span>
<svg class="a" style="left:170.40px;top:274.10px" width="6.2" height="4.4"><path d="M1 1 L3.10 3.40 L5.20 1" fill="none" stroke="#333" stroke-width="0.9" stroke-linecap="round" stroke-linejoin="round"/></svg>
<div class="a" style="left:179.4px;top:266.9px;width:32.2px;height:17.4px;border:1px solid #8e8e90;border-radius:2.5px;background:#fff"></div>
<span class="t" style="left:181.90px;top:271.98px;font-size:9px;color:#2f2f2f;transform:scaleX(0.8491);">12</span>
<svg class="a" style="left:204.40px;top:274.10px" width="6.2" height="4.4"><path d="M1 1 L3.10 3.40 L5.20 1" fill="none" stroke="#333" stroke-width="0.9" stroke-linecap="round" stroke-linejoin="round"/></svg>
<span class="t" style="left:216.90px;top:269.33px;font-size:12.6px;color:#3a3a3a;transform:scaleX(0.9162);">A</span>
<svg class="a" style="left:224.4px;top:270.8px;" width="5" height="4" viewBox="0 0 5 4"><path d="M0.8 3 L2.4 1 L4 3" fill="none" stroke="#1e7fd6" stroke-width="0.9" stroke-linejoin="round"/></svg>
<span class="t" style="left:236.90px;top:271.20px;font-size:10.4px;color:#3a3a3a;transform:scaleX(0.9082);">A</span>
<svg class="a" style="left:242.6px;top:270.6px;" width="5" height="4" viewBox="0 0 5 4"><path d="M0.8 1 L2.4 3 L4 1" fill="none" stroke="#1e7fd6" stroke-width="0.9" stroke-linejoin="round"/></svg>
<div class="a" style="left:251.00px;top:267.50px;width:1.00px;height:16.90px;background:#dcdcdc;"></div>
<span class="t" style="left:256.00px;top:271.20px;font-size:10.4px;color:#3a3a3a;transform:scaleX(0.9433);">Aa</span>
<svg class="a" style="left:271.20px;top:273.70px" width="6.6" height="4.6"><path d="M1 1 L3.30 3.60 L5.60 1" fill="none" stroke="#444" stroke-width="0.9" stroke-linecap="round" stroke-linejoin="round"/></svg>
<div class="a" style="left:283.00px;top:267.50px;width:1.00px;height:16.90px;background:#dcdcdc;"></div>
<span class="t" style="left:288.50px;top:268.90px;font-size:12.4px;color:#3a3a3a;transform:scaleX(0.9068);">A</span>
<svg class="a" style="left:293.6px;top:275.4px;" width="7" height="7" viewBox="0 0 7 7"><path d="M3.6 0.8 L6.2 2.8 L3.2 6.2 L0.8 4.2Z" fill="#c77ad8" stroke="#9a3fb4" stroke-width="0.7" stroke-linejoin="round"/></svg>
<span class="t" style="left:92.25px;top:293.63px;font-size:10.6px;color:#2b2b2b;font-weight:700;transform:scaleX(0.7773);">B</span>
<span class="t" style="left:111.80px;top:293.72px;font-size:10.6px;color:#2b2b2b;font-style:italic;font-family:'Liberation Serif',serif;transform:scaleX(1.3597);">I</span>
<span class="t" style="left:129.60px;top:293.74px;font-size:10px;color:#2b2b2b;transform:scaleX(0.8308);">U</span>
<div class="a" style="left:129.40px;top:303.60px;width:6.40px;height:0.90px;background:#2b2b2b;"></div>
<svg class="a" style="left:144.40px;top:297.70px" width="6.6" height="4.6"><path d="M1 1 L3.30 3.60 L5.60 1" fill="none" stroke="#444" stroke-width="0.9" stroke-linecap="round" stroke-linejoin="round"/></svg>
<span class="t" style="left:158.60px;top:294.98px;font-size:9px;color:#444;transform:scaleX(0.8990);">ab</span>
<div class="a" style="left:157.20px;top:299.20px;width:11.60px;height:0.90px;background:#444;"></div>
<span class="t" style="left:179.75px;top:293.80px;font-size:10.4px;color:#2b2b2b;transform:scaleX(0.9327);">x</span>
<span class="t" style="left:185.00px;top:300.06px;font-size:5.6px;color:#1e7fd6;">2</span>
<span class="t" style="left:198.75px;top:293.80px;font-size:10.4px;color:#2b2b2b;transform:scaleX(0.9327);">x</span>
<span class="t" style="left:204.00px;top:292.86px;font-size:5.6px;color:#1e7fd6;">2</span>
<div class="a" style="left:211.00px;top:291.00px;width:1.00px;height:17.00px;background:#dcdcdc;"></div>
<span class="t" style="left:216.6px;top:292.53px;font-size:12.6px;font-weight:700;color:#fff;-webkit-text-stroke:0.8px #b4b4b6;transform:scaleX(1.12)">A</span>
<svg class="a" style="left:232.40px;top:297.70px" width="6.6" height="4.6"><path d="M1 1 L3.30 3.60 L5.60 1" fill="none" stroke="#c4c4c6" stroke-width="0.9" stroke-linecap="round" stroke-linejoin="round"/></svg>
<svg class="a" style="left:246.6px;top:292px;" width="13" height="14" viewBox="0 0 13 14"><path d="M3.4 8.6 L8.4 1.6 Q9.4 0.6 10.6 1.6 Q11.4 2.6 10.6 3.6 L5.8 10.2 Z" fill="#fff" stroke="#444" stroke-width="0.85" stroke-linejoin="round"/><path d="M3.4 8.6 L5.8 10.2 L3.4 10.6 L2 10.4Z" fill="#444"/><rect x="0.2" y="11" width="12.2" height="2.6" fill="#ffef00"/></svg>
<svg class="a" style="left:264.00px;top:297.70px" width="6.6" height="4.6"><path d="M1 1 L3.30 3.60 L5.60 1" fill="none" stroke="#444" stroke-width="0.9" stroke-linecap="round" stroke-linejoin="round"/></svg>
<span class="t" style="left:279.40px;top:291.95px;font-size:11.4px;color:#3a3a3a;transform:scaleX(0.9469);">A</span>
<div class="a" style="left:277.00px;top:303.00px;width:12.00px;height:2.60px;background:#f01414;"></div>
<svg class="a" style="left:294.40px;top:297.70px" width="6.6" height="4.6"><path d="M1 1 L3.30 3.60 L5.60 1" fill="none" stroke="#444" stroke-width="0.9" stroke-linecap="round" stroke-linejoin="round"/></svg>
<span class="t" style="left:180.90px;top:320.79px;font-size:8.4px;color:#505050;transform:scaleX(0.8389);">Font</span>
<svg class="a" style="left:300.2px;top:322.2px;" width="6" height="6" viewBox="0 0 6 6"><path d="M0.5 4.4 L0.5 0.5 L4.4 0.5" fill="none" stroke="#555" stroke-width="0.9"/><path d="M2.2 2.2 L5.4 5.4 M5.6 2.6 L5.6 5.6 L2.6 5.6" fill="none" stroke="#555" stroke-width="0.9"/></svg>
<div class="a" style="left:308.25px;top:262.50px;width:1.00px;height:65.30px;background:#dcdcdc;"></div>
<svg class="a" style="left:318px;top:270px;" width="12" height="11.4" viewBox="0 0 12 11.4"><rect x="0" y="0.2" width="1.8" height="1.8" fill="#1e7fd6"/><rect x="0" y="4.7" width="1.8" height="1.8" fill="#1e7fd6"/><rect x="0" y="9.2" width="1.8" height="1.8" fill="#1e7fd6"/><rect x="3.6" y="0.6" width="7.8" height="1" fill="#666"/><rect x="3.6" y="5.1" width="7.8" height="1" fill="#666"/><rect x="3.6" y="9.6" width="7.8" height="1" fill="#666"/></svg>
<svg class="a" style="left:335.20px;top:273.70px" width="6.6" height="4.6"><path d="M1 1 L3.30 3.60 L5.60 1" fill="none" stroke="#444" stroke-width="0.9" stroke-linecap="round" stroke-linejoin="round"/></svg>
<svg class="a" style="left:348px;top:270px;" width="12" height="11.4" viewBox="0 0 12 11.4"><g fill="#1e7fd6" font-size="4.2" font-family="Liberation Sans,sans-serif" font-weight="700"><text x="0" y="3.4">1</text><text x="0" y="7.6">2</text><text x="0" y="11.6">3</text></g><rect x="3.6" y="1.2" width="7.8" height="1" fill="#666"/><rect x="3.6" y="5.4" width="7.8" height="1" fill="#666"/><rect x="3.6" y="9.6" width="7.8" height="1" fill="#666"/></svg>
<svg class="a" style="left:365.60px;top:273.70px" width="6.6" height="4.6"><path d="M1 1 L3.30 3.60 L5.60 1" fill="none" stroke="#444" stroke-width="0.9" stroke-linecap="round" stroke-linejoin="round"/></svg>
<svg class="a" style="left:378.6px;top:270px;" width="12" height="11.6" viewBox="0 0 12 11.6"><g fill="#1e7fd6" font-size="4" font-family="Liberation Sans,sans-serif" font-weight="700"><text x="0" y="3.2">1</text><text x="2.6" y="7.4">a</text><text x="5.2" y="11.6">i</text></g><rect x="3.6" y="1.1" width="7.8" height="1" fill="#666"/><rect x="6" y="5.3" width="5.4" height="1" fill="#666"/><rect x="8" y="9.5" width="3.4" height="1" fill="#666"/></svg>
<svg class="a" style="left:395.00px;top:273.70px" width="6.6" height="4.6"><path d="M1 1 L3.30 3.60 L5.60 1" fill="none" stroke="#444" stroke-width="0.9" stroke-linecap="round" stroke-linejoin="round"/></svg>
<div class="a" style="left:406.00px;top:267.50px;width:1.00px;height:16.90px;background:#dcdcdc;"></div>
<svg class="a" style="left:411.8px;top:270px;" width="11" height="11.4" viewBox="0 0 11 11.4"><rect x="0" y="0.6" width="10.6" height="1" fill="#666"/><rect x="5.6" y="3.8" width="5" height="1" fill="#666"/><rect x="5.6" y="6.8" width="5" height="1" fill="#666"/><rect x="0" y="9.8" width="10.6" height="1" fill="#666"/><path d="M0.4 5.6 L4.4 5.6 M2 3.8 L0.4 5.6 L2 7.4" fill="none" stroke="#1e7fd6" stroke-width="0.95" stroke-linejoin="round"/></svg>
<svg class="a" style="left:430.6px;top:270px;" width="11" height="11.4" viewBox="0 0 11 11.4"><rect x="0" y="0.6" width="10.6" height="1" fill="#666"/><rect x="5.6" y="3.8" width="5" height="1" fill="#666"/><rect x="5.6" y="6.8" width="5" height="1" fill="#666"/><rect x="0" y="9.8" width="10.6" height="1" fill="#666"/><path d="M0.4 5.6 L4.4 5.6 M2.8 3.8 L4.4 5.6 L2.8 7.4" fill="none" stroke="#1e7fd6" stroke-width="0.95" stroke-linejoin="round"/></svg>
<div class="a" style="left:446.00px;top:267.50px;width:1.00px;height:16.90px;background:#dcdcdc;"></div>
<svg class="a" style="left:450.4px;top:269.6px;" width="13" height="13" viewBox="0 0 13 13"><text x="0.2" y="5.6" font-size="6.4" font-weight="700" font-family="Liberation Sans,sans-serif" fill="#1e7fd6">A</text><text x="0.4" y="12.2" font-size="6.4" font-weight="700" font-family="Liberation Sans,sans-serif" fill="#333">Z</text><path d="M9.6 1 L9.6 11.4 M7 9 L9.6 11.6 L12.2 9" fill="none" stroke="#444" stroke-width="0.95" stroke-linejoin="round"/></svg>
<div class="a" style="left:467.00px;top:267.50px;width:1.00px;height:16.90px;background:#dcdcdc;"></div>
<span class="t" style="left:473.60px;top:270.58px;font-size:11.6px;color:#333;transform:scaleX(1.2519);">¶</span>
<svg class="a" style="left:318.5px;top:293.8px;" width="11" height="11" viewBox="0 0 11 11"><rect x="0.0" y="0.3" width="10.8" height="0.95" fill="#555"/><rect x="0.0" y="3.5" width="7" height="0.95" fill="#555"/><rect x="0.0" y="6.7" width="10.8" height="0.95" fill="#555"/><rect x="0.0" y="9.9" width="7" height="0.95" fill="#555"/></svg>
<svg class="a" style="left:337.4px;top:293.8px;" width="11" height="11" viewBox="0 0 11 11"><rect x="0.0" y="0.3" width="10.8" height="0.95" fill="#555"/><rect x="1.9" y="3.5" width="7" height="0.95" fill="#555"/><rect x="0.0" y="6.7" width="10.8" height="0.95" fill="#555"/><rect x="1.9" y="9.9" width="7" height="0.95" fill="#555"/></svg>
<svg class="a" style="left:356.4px;top:293.8px;" width="11" height="11" viewBox="0 0 11 11"><rect x="0.0" y="0.3" width="10.8" height="0.95" fill="#555"/><rect x="3.8" y="3.5" width="7" height="0.95" fill="#555"/><rect x="0.0" y="6.7" width="10.8" height="0.95" fill="#555"/><rect x="3.8" y="9.9" width="7" height="0.95" fill="#555"/></svg>
<div class="a" style="left:371.9px;top:290.6px;width:18.2px;height:18px;border:1px solid #9c9c9e;border-radius:3px;background:#e8e7e9"></div>
<svg class="a" style="left:375.6px;top:293.8px;" width="11" height="11" viewBox="0 0 11 11"><rect x="0.0" y="0.3" width="10.8" height="0.95" fill="#555"/><rect x="0.0" y="3.5" width="10.8" height="0.95" fill="#555"/><rect x="0.0" y="6.7" width="10.8" height="0.95" fill="#555"/><rect x="0.0" y="9.9" width="10.8" height="0.95" fill="#555"/></svg>
<svg class="a" style="left:395.4px;top:293.4px;" width="13" height="12" viewBox="0 0 13 12"><path d="M2 0.8 L2 11 M0.4 2.4 L2 0.6 L3.6 2.4 M0.4 9.4 L2 11.2 L3.6 9.4" fill="none" stroke="#1e7fd6" stroke-width="0.95" stroke-linejoin="round"/><rect x="5.6" y="0.8" width="7" height="0.95" fill="#555"/><rect x="5.6" y="4.2" width="7" height="0.95" fill="#555"/><rect x="5.6" y="7.6" width="7" height="0.95" fill="#555"/><rect x="5.6" y="11" width="7" height="0.95" fill="#555"/></svg>
<svg class="a" style="left:411.40px;top:297.70px" width="6.6" height="4.6"><path d="M1 1 L3.30 3.60 L5.60 1" fill="none" stroke="#444" stroke-width="0.9" stroke-linecap="round" stroke-linejoin="round"/></svg>
<div class="a" style="left:423.00px;top:291.00px;width:1.00px;height:17.00px;background:#dcdcdc;"></div>
<svg class="a" style="left:428px;top:292.6px;" width="13" height="14" viewBox="0 0 13 14"><path d="M5.6 1 L10 5.6 L5.6 9.6 L1.8 5.6Z" fill="#fff" stroke="#444" stroke-width="0.85" stroke-linejoin="round"/><path d="M5.4 1.2 L4 0.2" stroke="#444" stroke-width="0.8"/><path d="M10.2 4 Q11.8 6.4 11 8.6" fill="none" stroke="#1e7fd6" stroke-width="1.1"/><rect x="0.6" y="10.8" width="11.4" height="2.4" fill="#fff" stroke="#b8b8ba" stroke-width="0.7"/></svg>
<svg class="a" style="left:445.20px;top:297.70px" width="6.6" height="4.6"><path d="M1 1 L3.30 3.60 L5.60 1" fill="none" stroke="#444" stroke-width="0.9" stroke-linecap="round" stroke-linejoin="round"/></svg>
<svg class="a" style="left:458px;top:293.4px;" width="12.4" height="12" viewBox="0 0 12.4 12"><g fill="none" stroke="#b4b4b6" stroke-width="0.8"><path d="M0.5 0.5 L11.7 0.5 M0.5 0.5 L0.5 11 M11.7 0.5 L11.7 11 M6.1 0.5 L6.1 11 M0.5 5.7 L11.7 5.7"/></g><path d="M0.2 11 L12 11" stroke="#555" stroke-width="1"/></svg>
<svg class="a" style="left:475.40px;top:297.70px" width="6.6" height="4.6"><path d="M1 1 L3.30 3.60 L5.60 1" fill="none" stroke="#444" stroke-width="0.9" stroke-linecap="round" stroke-linejoin="round"/></svg>
<span class="t" style="left:376.25px;top:320.79px;font-size:8.4px;color:#505050;transform:scaleX(0.9177);">Paragraph</span>
<svg class="a" style="left:483.2px;top:322.2px;" width="6" height="6" viewBox="0 0 6 6"><path d="M0.5 4.4 L0.5 0.5 L4.4 0.5" fill="none" stroke="#555" stroke-width="0.9"/><path d="M2.2 2.2 L5.4 5.4 M5.6 2.6 L5.6 5.6 L2.6 5.6" fill="none" stroke="#555" stroke-width="0.9"/></svg>
<div class="a" style="left:491.75px;top:262.50px;width:1.00px;height:65.30px;background:#dcdcdc;"></div>
<div class="a" style="left:499.4px;top:267.4px;width:339.4px;height:44.2px;border:1px solid #d2d0d3;border-radius:4px;background:#fff"></div>
<span class="t" style="left:515.00px;top:285.00px;font-size:12px;color:#3f3f3f;font-family:'Liberation Mono',monospace;transform:scaleX(0.9800);">Caption</span>
<div class="a" style="left:580px;top:268px;width:79.8px;height:41.8px;border:1.1px solid #6a6a6c;background:#fff;box-shadow:inset 0 0 0 1.6px #e6e5e7"></div>
<span class="t" style="left:598.50px;top:285.00px;font-size:12px;color:#3f3f3f;font-family:'Liberation Mono',monospace;transform:scaleX(0.9663);">Normal</span>
<span class="t" style="left:664.40px;top:285.00px;font-size:12px;color:#3f3f3f;font-family:'Liberation Mono',monospace;transform:scaleX(0.9839);">No Spacing</span>
<span class="t" style="left:746.25px;top:282.44px;font-size:14.6px;color:#111;font-weight:700;transform:scaleX(0.9459);">Heading 1</span>
<div class="a" style="left:821px;top:267.2px;width:17.8px;height:44.4px;border:1px solid #707072;border-radius:0 4px 4px 0;background:#fff"></div>
<svg class="a" style="left:826.4px;top:285.6px;" width="7" height="6" viewBox="0 0 7 6"><path d="M0.8 0.8 L6 0.8 M0.8 2.8 L3.4 5.2 L6 2.8" fill="none" stroke="#555" stroke-width="0.85" stroke-linejoin="round"/></svg>
<span class="t" style="left:653.00px;top:320.79px;font-size:8.4px;color:#505050;transform:scaleX(0.8415);">Styles</span>
<svg class="a" style="left:838px;top:322.2px;" width="6" height="6" viewBox="0 0 6 6"><path d="M0.5 4.4 L0.5 0.5 L4.4 0.5" fill="none" stroke="#555" stroke-width="0.9"/><path d="M2.2 2.2 L5.4 5.4 M5.6 2.6 L5.6 5.6 L2.6 5.6" fill="none" stroke="#555" stroke-width="0.9"/></svg>
<div class="a" style="left:846.00px;top:262.50px;width:1.00px;height:65.30px;background:#dcdcdc;"></div>
<svg class="a" style="left:856px;top:264.2px;" width="12" height="12" viewBox="0 0 12 12"><circle cx="7.4" cy="4.2" r="3.5" fill="none" stroke="#444" stroke-width="0.9"/><path d="M4.8 6.8 L0.6 11.2" stroke="#444" stroke-width="0.95" stroke-linecap="round"/></svg>
<span class="t" style="left:871.00px;top:265.81px;font-size:9.2px;color:#2f2f2f;transform:scaleX(0.9079);">Find</span>
<svg class="a" style="left:900.20px;top:267.70px" width="6.6" height="4.6"><path d="M1 1 L3.30 3.60 L5.60 1" fill="none" stroke="#444" stroke-width="0.9" stroke-linecap="round" stroke-linejoin="round"/></svg>
<svg class="a" style="left:855.6px;top:283.4px;" width="12" height="12" viewBox="0 0 12 12"><text x="5" y="5" font-size="6.6" font-family="Liberation Sans,sans-serif" fill="#b040c0">b</text><text x="7.6" y="11.4" font-size="6.6" font-family="Liberation Sans,sans-serif" fill="#2a8cd6">c</text><path d="M4 4 Q0.8 4.4 1.2 7.6 Q1.6 9.8 5 9.6 M3.4 7.8 L5.2 9.6 L3.4 11.4" fill="none" stroke="#2a8cd6" stroke-width="0.9" stroke-linejoin="round"/></svg>
<span class="t" style="left:871.00px;top:285.01px;font-size:9.2px;color:#2f2f2f;transform:scaleX(0.9184);">Replace</span>
<svg class="a" style="left:857px;top:302.2px;" width="9" height="12" viewBox="0 0 9 12"><path d="M0.8 0.8 L0.8 9.6 L3 7.6 L4.6 11.2 L6 10.6 L4.5 7.2 L7.4 7.1Z" fill="#fff" stroke="#444" stroke-width="0.85" stroke-linejoin="round"/></svg>
<span class="t" style="left:871.00px;top:304.01px;font-size:9.2px;color:#2f2f2f;transform:scaleX(0.9151);">Select</span>
<svg class="a" style="left:896.80px;top:305.70px" width="6.6" height="4.6"><path d="M1 1 L3.30 3.60 L5.60 1" fill="none" stroke="#444" stroke-width="0.9" stroke-linecap="round" stroke-linejoin="round"/></svg>
<span class="t" style="left:870.60px;top:320.79px;font-size:8.4px;color:#505050;transform:scaleX(0.9110);">Editing</span>
<div class="a" style="left:917.25px;top:262.50px;width:1.00px;height:65.30px;background:#dcdcdc;"></div>
<svg class="a" style="left:932px;top:263.6px;" width="16" height="23.4" viewBox="0 0 16 23.4"><rect x="4.2" y="0.5" width="7.6" height="15.4" rx="3.8" fill="#73b6ec" stroke="#2a7bd0" stroke-width="0.9"/><path d="M1 11 Q1 19 8 19 Q15 19 15 11" fill="none" stroke="#444" stroke-width="0.95"/><path d="M8 19.2 L8 22.8" stroke="#444" stroke-width="0.95"/></svg>
<span class="t" style="left:926.25px;top:291.01px;font-size:9.2px;color:#2f2f2f;transform:scaleX(0.9691);">Dictate</span>
<svg class="a" style="left:936.80px;top:304.70px" width="6.6" height="4.6"><path d="M1 1 L3.30 3.60 L5.60 1" fill="none" stroke="#444" stroke-width="0.9" stroke-linecap="round" stroke-linejoin="round"/></svg>
<span class="t" style="left:930.25px;top:320.79px;font-size:8.4px;color:#505050;transform:scaleX(0.8638);">Voice</span>
<div class="a" style="left:961.00px;top:262.50px;width:1.00px;height:65.30px;background:#dcdcdc;"></div>
<svg class="a" style="left:974.6px;top:264.8px;" width="21.4" height="21.4" viewBox="0 0 21.4 21.4"><g fill="none" stroke="#b4b4b6" stroke-width="0.9"><rect x="0.5" y="0.5" width="20.4" height="20.4"/><rect x="2.8" y="2.8" width="6.6" height="6.6"/><rect x="12" y="2.8" width="6.6" height="6.6"/><rect x="2.8" y="12" width="6.6" height="6.6"/><rect x="12" y="12" width="6.6" height="6.6"/></g></svg>
<span class="t" style="left:970.00px;top:290.81px;font-size:9.2px;color:#b4b4b6;transform:scaleX(0.9809);">Add-ins</span>
<span class="t" style="left:971.00px;top:320.79px;font-size:8.4px;color:#505050;transform:scaleX(0.9216);">Add-ins</span>
<div class="a" style="left:1007.90px;top:262.50px;width:1.00px;height:65.30px;background:#dcdcdc;"></div>
<svg class="a" style="left:1017.6px;top:263.6px;" width="24.4" height="23.6" viewBox="0 0 24.4 23.6"><path d="M1.2 22 L2.6 17.6 L13.6 1.6 L17.2 4 L6.2 19.8Z M13 2.6 L16.4 4.8" fill="#fff" stroke="#1c5ac8" stroke-width="1.1" stroke-linejoin="round"/><g stroke="#1c5ac8" stroke-width="2.1" stroke-linecap="round"><path d="M14.6 9.2 L22.6 9.2"/><path d="M12 13.2 L19.6 13.2"/><path d="M9.6 17.2 L16 17.2"/><path d="M7.6 21 L12.4 21"/></g></svg>
<span class="t" style="left:1018.00px;top:290.81px;font-size:9.2px;color:#2f2f2f;transform:scaleX(0.9778);">Editor</span>
<svg class="a" style="left:1051px;top:264.4px;" width="22.4" height="21.6" viewBox="0 0 22.4 21.6"><defs><linearGradient id="cp1" x1="0.3" y1="0" x2="0.2" y2="1"><stop offset="0" stop-color="#2a8af0"/><stop offset="0.45" stop-color="#25c2b0"/><stop offset="0.8" stop-color="#b8d84a"/><stop offset="1" stop-color="#f2c23a"/></linearGradient>
<linearGradient id="cp2" x1="0.8" y1="0" x2="0.4" y2="1"><stop offset="0" stop-color="#8a66f2"/><stop offset="0.45" stop-color="#d858c8"/><stop offset="0.8" stop-color="#f0607a"/><stop offset="1" stop-color="#f58a2a"/></linearGradient></defs>
<path d="M7.6 0.8 L13.2 0.8 Q15.6 0.8 16.2 3 L17 5.6 L12.6 5.6 Q10.6 5.6 10 7.6 L7.4 16.6 Q6.8 18.6 4.8 18.6 L3.2 18.6 Q-0.2 18.6 0.8 15 L4 3.6 Q4.8 0.8 7.6 0.8Z" fill="url(#cp1)"/>
<path d="M14.8 20.8 L9.2 20.8 Q6.8 20.8 6.2 18.6 L5.4 16 L9.8 16 Q11.8 16 12.4 14 L15 5 Q15.6 3 17.6 3 L19.2 3 Q22.6 3 21.6 6.6 L18.4 18 Q17.6 20.8 14.8 20.8Z" fill="url(#cp2)"/>
<path d="M7.6 0.8 L13.2 0.8 Q15.6 0.8 16.2 3 L17 5.6 L12.6 5.6 Q10.6 5.6 10 7.6 L9.4 9.6 L6 4 Q6.4 0.8 7.6 0.8Z" fill="#2a7af0" opacity="0.75"/></svg>
<span class="t" style="left:1048.00px;top:290.81px;font-size:9.2px;color:#2f2f2f;transform:scaleX(1.0126);">Copilot</span>
<div class="a" style="left:1083.90px;top:262.50px;width:1.00px;height:65.30px;background:#dcdcdc;"></div>
<svg class="a" style="left:1128.00px;top:318.90px" width="9.2" height="5.6"><path d="M1 1 L4.60 4.60 L8.20 1" fill="none" stroke="#444" stroke-width="1" stroke-linecap="round" stroke-linejoin="round"/></svg>
<div class="a" style="left:9px;top:794.7px;width:1134px;height:10.3px;background:#f5f5f6;overflow:hidden;border-bottom:1px solid #fff">
<span class="t" style="left:9.75px;top:4.1px;font-size:8.2px;color:#4a4a4a;transform:scaleX(0.9174)">Page 16 of 41</span>
<span class="t" style="left:72.50px;top:4.1px;font-size:8.2px;color:#4a4a4a;transform:scaleX(0.9376)">8048 words</span>
<span class="t" style="left:153.00px;top:4.1px;font-size:8.2px;color:#4a4a4a;transform:scaleX(0.9267)">Text Predictions: On</span>
<span class="t" style="left:248.60px;top:4.1px;font-size:8.2px;color:#4a4a4a;transform:scaleX(0.9341)">Accessibility: Unavailable</span>
<span class="t" style="left:880.70px;top:4.1px;font-size:8.2px;color:#4a4a4a;transform:scaleX(0.8643)">Focus</span>
<span class="t" style="left:1105.70px;top:4.1px;font-size:8.2px;color:#4a4a4a;transform:scaleX(0.8916)">100%</span>
<svg class="a" style="left:0;top:-0.5px" width="1134" height="11"><g fill="none" stroke="#555" stroke-width="0.9"><path d="M128 4.6 L128 11 M128 4.6 L132.4 4.6 L132.4 11 M132.4 4.6 L137 4.6 L137 11"/><circle cx="240.6" cy="7.6" r="2.6"/><path d="M238 11 L238 14"/><path d="M868.6 4.4 L868.6 11 M868.6 4.4 L870.6 4.4 M878.6 4.4 L876.6 4.4 M878.6 4.4 L878.6 11 M871 5.6 L875 5.6 L876.4 7 L876.4 11 M871 5.6 L871 11"/></g><rect x="939.6" y="0" width="29.4" height="11" fill="#e1e0e2"/><g fill="none" stroke="#555" stroke-width="0.9"><path d="M919.6 4.4 L919.6 11 M919.6 4.4 L923.8 4.4 L923.8 11 M924.6 4.4 L928.8 4.4 L928.8 11 M924.6 4.4 L924.6 11"/><rect x="950.8" y="4.6" width="7" height="8"/><path d="M950.8 7.6 L957.8 7.6"/><path d="M979 11 L979 4.6 L988.6 4.6 L988.6 8 M979 6.6 L988.6 6.6"/><circle cx="986" cy="10.6" r="2.6"/><path d="M1003.4 8.4 L1008.4 8.4 M1090 8.4 L1095.4 8.4 M1092.7 5.8 L1092.7 11"/></g><rect x="1012.8" y="8" width="73" height="0.9" fill="#b5b5b7"/><rect x="1048.2" y="4.4" width="3.2" height="7" fill="#555"/></svg>
</div>
<svg class="a" style="left:1161px;top:292px;overflow:hidden" width="750" height="422" viewBox="0 0 750 422"><defs>
<clipPath id="vclip"><rect x="0" y="0" width="750" height="422"/></clipPath>
<filter id="b1" x="-10%" y="-10%" width="120%" height="120%"><feGaussianBlur stdDeviation="0.9"/></filter>
<filter id="b2" x="-20%" y="-20%" width="140%" height="140%"><feGaussianBlur stdDeviation="2.2"/></filter>
<filter id="b4" x="-30%" y="-30%" width="160%" height="160%"><feGaussianBlur stdDeviation="5"/></filter>
<filter id="b8" x="-40%" y="-40%" width="180%" height="180%"><feGaussianBlur stdDeviation="10"/></filter>
<filter id="b16" x="-50%" y="-50%" width="200%" height="200%"><feGaussianBlur stdDeviation="18"/></filter>
<linearGradient id="wd1" x1="0" y1="0" x2="0" y2="1"><stop offset="0" stop-color="#742f09"/><stop offset="0.3" stop-color="#541a03"/><stop offset="0.6" stop-color="#421002"/><stop offset="1" stop-color="#451202"/></linearGradient>
<linearGradient id="wd2" x1="0" y1="0" x2="0" y2="1"><stop offset="0" stop-color="#6a2807"/><stop offset="0.3" stop-color="#481402"/><stop offset="0.6" stop-color="#3c0b00"/><stop offset="1" stop-color="#3e0e01"/></linearGradient>
<linearGradient id="wfr" x1="0" y1="0" x2="0" y2="1"><stop offset="0" stop-color="#8a5220"/><stop offset="0.35" stop-color="#63300c"/><stop offset="1" stop-color="#4c1f07"/></linearGradient>
<linearGradient id="whd" x1="0" y1="0" x2="1" y2="0"><stop offset="0" stop-color="#9a6228"/><stop offset="0.5" stop-color="#955d25"/><stop offset="1" stop-color="#85501e"/></linearGradient>
<linearGradient id="skin" x1="0" y1="0" x2="0" y2="1"><stop offset="0" stop-color="#8a452f"/><stop offset="0.18" stop-color="#9a523f"/><stop offset="0.38" stop-color="#ab6558"/><stop offset="0.6" stop-color="#c0735f"/><stop offset="1" stop-color="#ad6a5e"/></linearGradient>
<linearGradient id="shirt" gradientUnits="userSpaceOnUse" x1="60" y1="0" x2="600" y2="0"><stop offset="0.000" stop-color="#cdb9b3"/><stop offset="0.148" stop-color="#d0bcb6"/><stop offset="0.259" stop-color="#c8b0aa"/><stop offset="0.352" stop-color="#cdb8af"/><stop offset="0.444" stop-color="#eed6ce"/><stop offset="0.704" stop-color="#f8e4da"/><stop offset="0.889" stop-color="#f0dad0"/><stop offset="1.000" stop-color="#e8d2c8"/></linearGradient>
<linearGradient id="navL" x1="1" y1="0" x2="0" y2="1"><stop offset="0" stop-color="#0a0710"/><stop offset="0.3" stop-color="#2e2834"/><stop offset="0.6" stop-color="#4a3f4c"/><stop offset="1" stop-color="#463c48"/></linearGradient>
<linearGradient id="prn" x1="0" y1="0" x2="0" y2="1"><stop offset="0" stop-color="#a29c90"/><stop offset="0.12" stop-color="#8a8379"/><stop offset="0.6" stop-color="#7a7067"/><stop offset="1" stop-color="#6a6058"/></linearGradient>
</defs>
<g clip-path="url(#vclip)">
<rect width="750" height="422" fill="#030101"/>
<rect x="640" y="0" width="62" height="150" fill="#2a0c05" filter="url(#b8)" opacity="0.9"/>
<rect x="565" y="0" width="60" height="240" fill="#120503" filter="url(#b8)"/>
<rect x="0" y="0" width="13" height="210" fill="#4a190c"/><rect x="0" y="0" width="8" height="60" fill="#3a0f08"/>
<rect x="12.4" y="0" width="13" height="210" fill="#080302"/>
<rect x="25" y="14" width="200" height="190" fill="url(#wfr)"/>
<rect x="25" y="15" width="200" height="27" fill="url(#whd)"/>
<rect x="48.5" y="41.5" width="176" height="160" fill="#3a1405"/>
<rect x="55.5" y="45.5" width="68" height="156" fill="url(#wd1)"/>
<rect x="130" y="45.5" width="72" height="156" fill="url(#wd2)"/>
<rect x="206" y="45.5" width="12" height="156" fill="#4a1804"/>
<rect x="56" y="44.4" width="146" height="1.8" fill="#8a6440" opacity="0.55"/>
<rect x="25" y="0" width="225" height="15.2" fill="#0a0b08"/>
<rect x="32.6" y="-3" width="97" height="17.4" fill="#222416" stroke="#c6bea0" stroke-width="1.3"/>
<rect x="136.5" y="-3" width="240" height="17" fill="#1a2a1e" stroke="#b8b49c" stroke-width="1.2"/>
<g font-family="'Liberation Sans',sans-serif" font-weight="700" fill="#d5d0b6"><text x="36.5" y="10.2" font-size="16.4" textLength="89" lengthAdjust="spacingAndGlyphs">ADDISON ST.</text><text x="148" y="10" font-size="16.4" textLength="94" lengthAdjust="spacingAndGlyphs">WRIGLEY FIELD</text></g>
<path d="M139.5 1 L139.5 8 Q139.8 11 141.6 12" stroke="#b8b49c" stroke-width="1.6" fill="none"/>
<circle cx="72.2" cy="129.8" r="27" fill="none" stroke="#7a573a" stroke-width="6" filter="url(#b1)"/>
<path d="M46.4 138 A27 27 0 0 1 60 105.6" fill="none" stroke="#8e6a4a" stroke-width="3" opacity="0.7" filter="url(#b1)"/>
<rect x="73" y="124.6" width="6.6" height="14" rx="1.5" fill="#0c0807"/><rect x="74.2" y="138" width="1.7" height="62" fill="#120906"/><rect x="72.6" y="160" width="5" height="9" fill="#150c08"/>
<path d="M0 205 Q20 196 60 197 L150 197 Q170 200 172 215 L172 422 L0 422Z" fill="#0a0405"/>
<g filter="url(#b1)"><rect x="97" y="211" width="21" height="21" fill="#746454"/><rect x="59.4" y="252" width="22" height="40" fill="#3c2d23"/><rect x="24" y="198" width="88" height="13" fill="#43141e"/><rect x="100" y="198" width="16" height="12" fill="#8a4a42"/><rect x="30" y="211" width="4" height="46" fill="#4a1a26"/></g>
<path d="M0 306 Q22 300 40 312 Q44 330 30 338 L0 342Z" fill="#24211e" filter="url(#b2)"/>
<path d="M0 205 L22 200 L24 290 L0 300Z" fill="#1c1c17" filter="url(#b2)"/>
<path d="M675.5 150 L750 146 L750 240 L675.5 240Z" fill="url(#prn)"/>
<path d="M616 176 L675.5 174 L675.5 240 L616 240Z" fill="#3a2416"/><rect x="616" y="214" width="134" height="26" fill="#5a4a3c" opacity="0.55" filter="url(#b2)"/>
<path d="M633 158 L650 142 L700 136 L731 134.5 L731 139 L698 150 L650 160Z" fill="#48301f"/><path d="M684 134.4 L731 131.8 L731 138 L690 141Z" fill="#84776a"/>
<rect x="731" y="131.6" width="19" height="15" fill="#8b857b"/>
<path d="M623 161.6 L642 147.6 L644 161.6Z" fill="#b0a89a"/><rect x="629" y="162.6" width="19" height="13.4" fill="#87796a"/>
<rect x="646.5" y="159.4" width="45.5" height="12" fill="#0a0808"/><rect x="644" y="152" width="32" height="7.6" fill="#6e6357"/>
<rect x="618" y="219" width="32" height="2.2" fill="#0e0b0a"/>
<path d="M180 232 L236 224 L300 286 L375 300 L400 232 L459 184 L522 188 L560 205 L589 212 L595 274 L593 316 L580 341 L579 358 L529 358 L530 337 L521.6 328 L519.5 422 L0 422 L0 386 L69 385 L117 345 L174 280Z" fill="url(#shirt)"/>
<ellipse cx="440" cy="400" rx="70" ry="40" fill="#fff0e6" opacity="0.8" filter="url(#b16)"/>
<path d="M96 398 Q130 382 168 392 Q150 400 120 412Z" fill="#8e7c7a" opacity="0.75" filter="url(#b4)"/>
<g filter="url(#b4)" opacity="0.5"><path d="M300 330 Q320 380 300 422 L330 422 Q345 380 320 330Z" fill="#cdb4b0"/><path d="M500 250 Q540 300 525 350 L545 350 Q565 300 530 245Z" fill="#c9b0ac"/><path d="M470 330 Q500 380 480 422 L510 422 Q520 370 500 325Z" fill="#dcc4be"/></g>
<path d="M186 372 Q200 372 213 392 L214 422 L178 422Z" fill="#0c0606" filter="url(#b1)"/>
<path d="M521.6 328 L530 337 L529 358 L533 372 L526 422 L518 422Z" fill="#060303"/>
<path d="M163 211 L180 195 L209 174 L245 180 L236.6 225.7 L180 234 L173.8 280 L117.3 345 L69 384.8 L33.5 376.4 L88 319.9 L134 252.9Z" fill="url(#navL)"/>
<path d="M163 211 L180 195 L209 174 L245 180 L240 218 L196 226Z" fill="#030104" filter="url(#b2)"/>
<path d="M150 250 L118 300 L76 350" stroke="#5a5366" stroke-width="5" fill="none" filter="url(#b4)" opacity="0.7"/>
<path d="M33 374 L70 385 L100 396 L84 402 L28 386Z" fill="#c8701e"/><path d="M30 381 L82 399" stroke="#1c1824" stroke-width="2"/>
<path d="M0 384 Q30 378 62 390 L74 422 L0 422Z" fill="#fbeadf"/>
<path d="M396 150 L412.7 129.8 L479.7 142.4 L532 155 L563.4 178 L584.4 199 L589 214 L588.6 232 L576 223.6 L563.4 211 L559 205 L522 188 L459 184.3 L465 211 L458.8 246.6 L421 252.9 L408.5 236 L400 211Z" fill="#130f1e"/>
<path d="M420 138 L520 156 L575 196" stroke="#2a2740" stroke-width="5" fill="none" filter="url(#b2)" opacity="0.8"/>
<path d="M328.7 282 L350 262 L386 236 L392 182 L400 196 L400 232 L383.4 259 L375 280 L356 305Z" fill="#8a200c"/>
<path d="M340 280 L372 254 L380 262 L352 298Z" fill="#b8401a" filter="url(#b1)"/><path d="M356 262 L386 238 L390 250 L366 280Z" fill="#730802" filter="url(#b2)"/>
<path d="M389 184 L396 190 L399 230 L384 258 L378 254 L392 226Z" fill="#130e1c"/><path d="M392 190 L395 228 L382 254" stroke="#b84a18" stroke-width="1.6" fill="none"/>
<path d="M240.8 242.4 L278.5 271.7 L326.6 288.5 L356 311.5 L343.4 336.6 L326.6 303 L293 284.3 L253.4 280 L242.9 252.9Z" fill="#2a2838"/>
<circle cx="327.7" cy="295.8" r="5.2" fill="#b5b4be" stroke="#6e6c7c" stroke-width="1"/><circle cx="327.7" cy="295.8" r="2" fill="#e0dfe6"/>
<path d="M426 318 Q424 308 434 306 Q440 304 447 306 Q452 301 460 302 Q470 304 472 312 Q475 322 470 334 Q466 346 455 352 Q450 354 445 350 Q436 344 432 336 Q428 328 426 318Z" fill="#c8741a"/>
<path d="M432 314 Q440 308 446 314 Q452 306 462 308 Q468 312 466 322 L462 336 L456 346 L452 340 L454 326 L448 322 L442 328 L440 338 L436 330Z" fill="#1e1020" opacity="0.9"/><path d="M446 318 L452 318 L454 332 L450 348 L447 332Z" fill="#e0902a"/>
<rect x="528.5" y="342" width="51" height="13.6" fill="#16131f"/><rect x="528.5" y="345.2" width="51" height="3.2" fill="#c05c20"/><rect x="528.5" y="351" width="51" height="2" fill="#c05c20"/>
<path d="M529 358 L579 358 L580 365 L532 366Z" fill="#e6d0ca"/>
<path d="M532 366 L562 364 L562 379 L533 380Z" fill="#3a1c14"/><rect x="561" y="364" width="18.6" height="19" rx="1.5" fill="#b9c0b6" stroke="#6e6e64" stroke-width="1.2"/>
<path d="M522 392 Q540 376 570 382 Q592 388 606 410 L612 422 L520 422Z" fill="#b97860"/><path d="M540 400 Q560 392 580 404" stroke="#94583f" stroke-width="2" fill="none" filter="url(#b1)"/>
<clipPath id="hclip"><path d="M245 -2 L360 -2 Q376 8 382 32 Q394 58 397.4 76 Q401 86 400 96 Q414 104 415 134 Q414 160 402 180 Q396 206 386.4 226.4 Q376 246 364.3 261.7 Q352 278 342.2 281.6 Q320 286 298 279.4 Q278 270 262.7 252.9 Q250 236 240.7 217.6 Q232 200 227.4 186.7 Q222 174 220.8 164.6 Q212 140 212 120.5 Q207 98 209.8 76.3 Q212 52 218.6 32.2 Q226 12 245 -2Z"/></clipPath>
<path d="M245 -2 L360 -2 Q376 8 382 32 Q394 58 397.4 76 Q401 86 400 96 Q414 104 415 134 Q414 160 402 180 Q396 206 386.4 226.4 Q376 246 364.3 261.7 Q352 278 342.2 281.6 Q320 286 298 279.4 Q278 270 262.7 252.9 Q250 236 240.7 217.6 Q232 200 227.4 186.7 Q222 174 220.8 164.6 Q212 140 212 120.5 Q207 98 209.8 76.3 Q212 52 218.6 32.2 Q226 12 245 -2Z" fill="url(#skin)"/>
<g clip-path="url(#hclip)">
<ellipse cx="354" cy="74" rx="32" ry="40" fill="#c98870" opacity="0.85" filter="url(#b8)"/>
<ellipse cx="238" cy="70" rx="20" ry="24" fill="#cc876b" opacity="0.8" filter="url(#b8)"/>
<ellipse cx="376" cy="150" rx="30" ry="60" fill="#cc7d72" opacity="0.6" filter="url(#b8)"/>
<ellipse cx="234" cy="172" rx="18" ry="34" fill="#c97660" opacity="0.6" filter="url(#b8)"/>
<ellipse cx="262" cy="30" rx="44" ry="30" fill="#82402b" opacity="0.6" filter="url(#b8)"/>
<ellipse cx="304" cy="252" rx="44" ry="24" fill="#a8645a" opacity="0.5" filter="url(#b8)"/>
</g>
<path d="M398 98 Q412 100 414.6 130 Q414 160 402 180 Q398 160 400 140 Q402 118 398 98Z" fill="#c27a68"/><path d="M404 112 Q409 130 405 160" stroke="#8e4a3e" stroke-width="2.4" fill="none" filter="url(#b1)"/>
<g clip-path="url(#hclip)"><ellipse cx="250" cy="136" rx="26" ry="13" fill="#8a4640" opacity="0.55" filter="url(#b4)"/><ellipse cx="330" cy="131" rx="30" ry="13" fill="#8a4640" opacity="0.5" filter="url(#b4)"/><ellipse cx="300" cy="150" rx="10" ry="20" fill="#c27a70" opacity="0.5" filter="url(#b4)"/></g>
<g filter="url(#b1)"><path d="M228 120 Q248 110 276 120" stroke="#b88470" stroke-width="3.2" fill="none" opacity="0.55"/><path d="M306 114 Q332 104 362 116" stroke="#b88470" stroke-width="3.2" fill="none" opacity="0.55"/>
<path d="M230 133 Q247 124 266 135 Q248 132 230 138Z" fill="#6e3a32"/><path d="M308 130 Q328 120 350 130 Q328 127 308 134Z" fill="#6e3a32"/>
<ellipse cx="247.5" cy="138.6" rx="10" ry="4.4" fill="#b9a4a4"/><ellipse cx="248" cy="138.4" rx="5" ry="4.2" fill="#5a6a86"/><circle cx="248" cy="138.4" r="2" fill="#181c28"/>
<ellipse cx="327" cy="134" rx="11" ry="4.4" fill="#b9a4a4"/><ellipse cx="326" cy="133.8" rx="5.2" ry="4.2" fill="#5a6a86"/><circle cx="326" cy="133.8" r="2" fill="#181c28"/>
<path d="M234 146 Q248 152 264 146" stroke="#9a5a4e" stroke-width="2" fill="none"/><path d="M312 142 Q330 149 350 140" stroke="#9a5a4e" stroke-width="2" fill="none"/></g>
<g filter="url(#b1)" opacity="0.7"><path d="M236 78 Q290 64 350 82" stroke="#8e4c3c" stroke-width="1.6" fill="none"/><path d="M232 94 Q290 82 356 100" stroke="#8e4c3c" stroke-width="1.6" fill="none"/><path d="M262 106 Q300 100 330 106" stroke="#d9a090" stroke-width="1.8" fill="none" opacity="0.6"/></g>
<ellipse cx="285" cy="178" rx="27" ry="22" fill="#b05a5a" opacity="0.8" filter="url(#b8)"/><ellipse cx="291" cy="186" rx="8" ry="6" fill="#c67874" opacity="0.8" filter="url(#b4)"/>
<path d="M262 194 Q270 202 282 198 Q296 204 308 194" stroke="#7e3a34" stroke-width="2.4" fill="none" filter="url(#b1)"/>
<path d="M262 150 Q256 176 258 192" stroke="#a45a50" stroke-width="3" fill="none" filter="url(#b2)"/>
<path d="M270 221 Q290 213 312 217 Q324 216 330 219 Q322 232 300 236 Q280 238 270 221Z" fill="#5e1e2a"/><path d="M276 224 Q298 218 326 221 Q314 230 298 231 Q284 232 276 224Z" fill="#b8687a"/><path d="M272 224 Q286 240 306 238 Q322 234 330 220" stroke="#c07a80" stroke-width="3" fill="none" filter="url(#b1)"/>
<g filter="url(#b1)" opacity="0.6"><path d="M264 236 Q270 252 284 262" stroke="#84463c" stroke-width="1.6" fill="none"/><path d="M300 252 Q322 258 342 248" stroke="#84463c" stroke-width="1.6" fill="none"/><path d="M344 232 Q352 246 348 262" stroke="#84463c" stroke-width="1.6" fill="none"/></g>
</g></svg>
<div class="a" style="left:1164.9px;top:687.1px;width:147.4px;height:26.9px;background:rgba(0,0,0,0.6);border-radius:5px"></div>
<svg class="a" style="left:1166px;top:690px;" width="26" height="22" viewBox="0 0 26 22"><g fill="#fff"><rect x="1.9" y="13.6" width="4.1" height="6.6" rx="0.8"/><rect x="8" y="8.9" width="4.1" height="11.3" rx="0.8"/><rect x="13.9" y="4.8" width="4.1" height="15.4" rx="0.8"/><rect x="19.8" y="1.8" width="4.2" height="18.4" rx="0.8"/></g></svg>
<span class="t" style="left:1198.30px;top:692.76px;font-size:18px;color:#fff;">Kyle Ermoian</span>
<div class="a" style="left:1148.80px;top:468.60px;width:6.40px;height:60.40px;background:#737373;"></div>
</body></html>
